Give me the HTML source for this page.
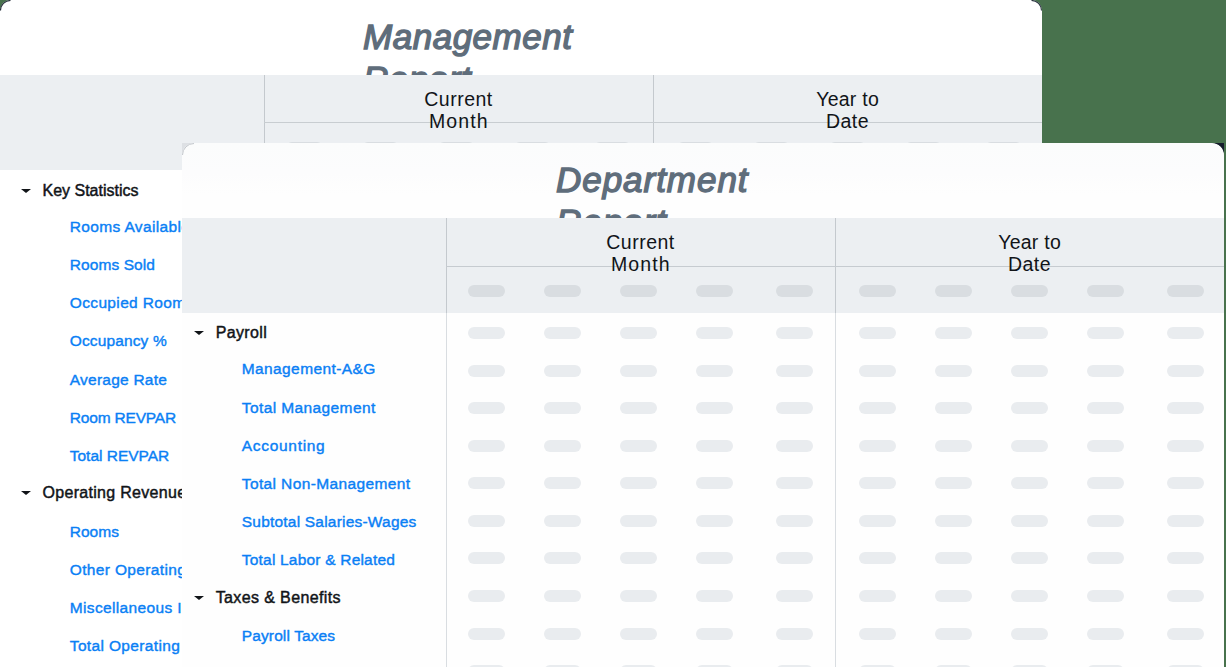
<!DOCTYPE html>
<html><head><meta charset="utf-8"><style>
html,body{margin:0;padding:0;}
body{width:1226px;height:667px;overflow:hidden;background:#48724d;position:relative;font-family:"Liberation Sans",sans-serif;}
.card{position:absolute;width:1042px;height:900px;background:#fff;border-radius:10.5px 10.5px 0 0;overflow:hidden;}
.front{background:#fefefe;border-radius:12px 12px 0 0;}
.frost{position:absolute;left:0;top:0;width:1042px;height:75px;background:linear-gradient(#fbfcfc 0px,#fcfcfd 30px,#fefefe 52px);}
.title{position:absolute;font:italic 35px/42.4px "Liberation Sans",sans-serif;letter-spacing:0.3px;-webkit-text-stroke:1.4px #5f6d7b;color:#5f6d7b;white-space:nowrap;}
.band{position:absolute;left:0;top:75px;width:1042px;height:95px;background:#eceff2;}
.vline{position:absolute;top:75px;width:1px;height:95px;background:#c4c9ce;}
.vline2{position:absolute;top:170px;width:1px;height:800px;background:#d9dde1;}
.hline{position:absolute;left:264px;top:123px;width:778px;height:1px;background:#c6cbd0;}
.card:not(.front) .hline{top:122px;background:#c8cdd1;}
.colh{position:absolute;top:88.8px;width:389px;text-align:center;font:19.5px/21.9px "Liberation Sans",sans-serif;letter-spacing:0.5px;color:#111418;}
.pill{position:absolute;width:37px;height:12px;border-radius:6px;}
.ph{background:#d9dde1;}
.pb{background:#e9ecef;}
.tri{position:absolute;width:0;height:0;border-left:5px solid transparent;border-right:5px solid transparent;border-top:4.7px solid #111418;}
.sh{position:absolute;white-space:nowrap;font:16.0px/16.0px "Liberation Sans",sans-serif;color:#111418;-webkit-text-stroke:0.45px #111418;letter-spacing:0.45px;}
.si{position:absolute;white-space:nowrap;font:15.5px/15.5px "Liberation Sans",sans-serif;color:#0a7ff5;-webkit-text-stroke:0.4px #0a7ff5;letter-spacing:0.25px;}
</style></head><body>
<div class="card" style="left:0px;top:0px">
<div class="title" style="left:363px;top:15.90px;letter-spacing:0.52px">Management<br>Report</div>
<div class="band"></div>
<div class="vline" style="left:264px"></div>
<div class="vline" style="left:653px"></div>
<div class="vline2" style="left:264px"></div>
<div class="vline2" style="left:653px"></div>
<div class="hline"></div>
<div class="colh" style="left:264px">Current<br><span style="letter-spacing:1.1px;margin-right:-0.6px">Month</span></div>
<div class="colh" style="left:653px"><span style="letter-spacing:0.25px;margin-right:-0.25px">Year to</span><br>Date</div>
<div class="pill ph" style="left:286.4px;top:142px"></div>
<div class="pill ph" style="left:362.4px;top:142px"></div>
<div class="pill ph" style="left:438.4px;top:142px"></div>
<div class="pill ph" style="left:514.4px;top:142px"></div>
<div class="pill ph" style="left:594.1px;top:142px"></div>
<div class="pill ph" style="left:677.0px;top:142px"></div>
<div class="pill ph" style="left:753.0px;top:142px"></div>
<div class="pill ph" style="left:829.0px;top:142px"></div>
<div class="pill ph" style="left:905.0px;top:142px"></div>
<div class="pill ph" style="left:985.0px;top:142px"></div>
<div class="pill pb" style="left:286.4px;top:184.00px"></div>
<div class="pill pb" style="left:362.4px;top:184.00px"></div>
<div class="pill pb" style="left:438.4px;top:184.00px"></div>
<div class="pill pb" style="left:514.4px;top:184.00px"></div>
<div class="pill pb" style="left:594.1px;top:184.00px"></div>
<div class="pill pb" style="left:677.0px;top:184.00px"></div>
<div class="pill pb" style="left:753.0px;top:184.00px"></div>
<div class="pill pb" style="left:829.0px;top:184.00px"></div>
<div class="pill pb" style="left:905.0px;top:184.00px"></div>
<div class="pill pb" style="left:985.0px;top:184.00px"></div>
<div class="pill pb" style="left:286.4px;top:221.60px"></div>
<div class="pill pb" style="left:362.4px;top:221.60px"></div>
<div class="pill pb" style="left:438.4px;top:221.60px"></div>
<div class="pill pb" style="left:514.4px;top:221.60px"></div>
<div class="pill pb" style="left:594.1px;top:221.60px"></div>
<div class="pill pb" style="left:677.0px;top:221.60px"></div>
<div class="pill pb" style="left:753.0px;top:221.60px"></div>
<div class="pill pb" style="left:829.0px;top:221.60px"></div>
<div class="pill pb" style="left:905.0px;top:221.60px"></div>
<div class="pill pb" style="left:985.0px;top:221.60px"></div>
<div class="pill pb" style="left:286.4px;top:259.20px"></div>
<div class="pill pb" style="left:362.4px;top:259.20px"></div>
<div class="pill pb" style="left:438.4px;top:259.20px"></div>
<div class="pill pb" style="left:514.4px;top:259.20px"></div>
<div class="pill pb" style="left:594.1px;top:259.20px"></div>
<div class="pill pb" style="left:677.0px;top:259.20px"></div>
<div class="pill pb" style="left:753.0px;top:259.20px"></div>
<div class="pill pb" style="left:829.0px;top:259.20px"></div>
<div class="pill pb" style="left:905.0px;top:259.20px"></div>
<div class="pill pb" style="left:985.0px;top:259.20px"></div>
<div class="pill pb" style="left:286.4px;top:296.80px"></div>
<div class="pill pb" style="left:362.4px;top:296.80px"></div>
<div class="pill pb" style="left:438.4px;top:296.80px"></div>
<div class="pill pb" style="left:514.4px;top:296.80px"></div>
<div class="pill pb" style="left:594.1px;top:296.80px"></div>
<div class="pill pb" style="left:677.0px;top:296.80px"></div>
<div class="pill pb" style="left:753.0px;top:296.80px"></div>
<div class="pill pb" style="left:829.0px;top:296.80px"></div>
<div class="pill pb" style="left:905.0px;top:296.80px"></div>
<div class="pill pb" style="left:985.0px;top:296.80px"></div>
<div class="pill pb" style="left:286.4px;top:334.40px"></div>
<div class="pill pb" style="left:362.4px;top:334.40px"></div>
<div class="pill pb" style="left:438.4px;top:334.40px"></div>
<div class="pill pb" style="left:514.4px;top:334.40px"></div>
<div class="pill pb" style="left:594.1px;top:334.40px"></div>
<div class="pill pb" style="left:677.0px;top:334.40px"></div>
<div class="pill pb" style="left:753.0px;top:334.40px"></div>
<div class="pill pb" style="left:829.0px;top:334.40px"></div>
<div class="pill pb" style="left:905.0px;top:334.40px"></div>
<div class="pill pb" style="left:985.0px;top:334.40px"></div>
<div class="pill pb" style="left:286.4px;top:372.00px"></div>
<div class="pill pb" style="left:362.4px;top:372.00px"></div>
<div class="pill pb" style="left:438.4px;top:372.00px"></div>
<div class="pill pb" style="left:514.4px;top:372.00px"></div>
<div class="pill pb" style="left:594.1px;top:372.00px"></div>
<div class="pill pb" style="left:677.0px;top:372.00px"></div>
<div class="pill pb" style="left:753.0px;top:372.00px"></div>
<div class="pill pb" style="left:829.0px;top:372.00px"></div>
<div class="pill pb" style="left:905.0px;top:372.00px"></div>
<div class="pill pb" style="left:985.0px;top:372.00px"></div>
<div class="pill pb" style="left:286.4px;top:409.60px"></div>
<div class="pill pb" style="left:362.4px;top:409.60px"></div>
<div class="pill pb" style="left:438.4px;top:409.60px"></div>
<div class="pill pb" style="left:514.4px;top:409.60px"></div>
<div class="pill pb" style="left:594.1px;top:409.60px"></div>
<div class="pill pb" style="left:677.0px;top:409.60px"></div>
<div class="pill pb" style="left:753.0px;top:409.60px"></div>
<div class="pill pb" style="left:829.0px;top:409.60px"></div>
<div class="pill pb" style="left:905.0px;top:409.60px"></div>
<div class="pill pb" style="left:985.0px;top:409.60px"></div>
<div class="pill pb" style="left:286.4px;top:447.20px"></div>
<div class="pill pb" style="left:362.4px;top:447.20px"></div>
<div class="pill pb" style="left:438.4px;top:447.20px"></div>
<div class="pill pb" style="left:514.4px;top:447.20px"></div>
<div class="pill pb" style="left:594.1px;top:447.20px"></div>
<div class="pill pb" style="left:677.0px;top:447.20px"></div>
<div class="pill pb" style="left:753.0px;top:447.20px"></div>
<div class="pill pb" style="left:829.0px;top:447.20px"></div>
<div class="pill pb" style="left:905.0px;top:447.20px"></div>
<div class="pill pb" style="left:985.0px;top:447.20px"></div>
<div class="pill pb" style="left:286.4px;top:484.80px"></div>
<div class="pill pb" style="left:362.4px;top:484.80px"></div>
<div class="pill pb" style="left:438.4px;top:484.80px"></div>
<div class="pill pb" style="left:514.4px;top:484.80px"></div>
<div class="pill pb" style="left:594.1px;top:484.80px"></div>
<div class="pill pb" style="left:677.0px;top:484.80px"></div>
<div class="pill pb" style="left:753.0px;top:484.80px"></div>
<div class="pill pb" style="left:829.0px;top:484.80px"></div>
<div class="pill pb" style="left:905.0px;top:484.80px"></div>
<div class="pill pb" style="left:985.0px;top:484.80px"></div>
<div class="pill pb" style="left:286.4px;top:522.40px"></div>
<div class="pill pb" style="left:362.4px;top:522.40px"></div>
<div class="pill pb" style="left:438.4px;top:522.40px"></div>
<div class="pill pb" style="left:514.4px;top:522.40px"></div>
<div class="pill pb" style="left:594.1px;top:522.40px"></div>
<div class="pill pb" style="left:677.0px;top:522.40px"></div>
<div class="pill pb" style="left:753.0px;top:522.40px"></div>
<div class="pill pb" style="left:829.0px;top:522.40px"></div>
<div class="pill pb" style="left:905.0px;top:522.40px"></div>
<div class="pill pb" style="left:985.0px;top:522.40px"></div>
<div class="pill pb" style="left:286.4px;top:560.00px"></div>
<div class="pill pb" style="left:362.4px;top:560.00px"></div>
<div class="pill pb" style="left:438.4px;top:560.00px"></div>
<div class="pill pb" style="left:514.4px;top:560.00px"></div>
<div class="pill pb" style="left:594.1px;top:560.00px"></div>
<div class="pill pb" style="left:677.0px;top:560.00px"></div>
<div class="pill pb" style="left:753.0px;top:560.00px"></div>
<div class="pill pb" style="left:829.0px;top:560.00px"></div>
<div class="pill pb" style="left:905.0px;top:560.00px"></div>
<div class="pill pb" style="left:985.0px;top:560.00px"></div>
<div class="pill pb" style="left:286.4px;top:597.60px"></div>
<div class="pill pb" style="left:362.4px;top:597.60px"></div>
<div class="pill pb" style="left:438.4px;top:597.60px"></div>
<div class="pill pb" style="left:514.4px;top:597.60px"></div>
<div class="pill pb" style="left:594.1px;top:597.60px"></div>
<div class="pill pb" style="left:677.0px;top:597.60px"></div>
<div class="pill pb" style="left:753.0px;top:597.60px"></div>
<div class="pill pb" style="left:829.0px;top:597.60px"></div>
<div class="pill pb" style="left:905.0px;top:597.60px"></div>
<div class="pill pb" style="left:985.0px;top:597.60px"></div>
<div class="pill pb" style="left:286.4px;top:635.20px"></div>
<div class="pill pb" style="left:362.4px;top:635.20px"></div>
<div class="pill pb" style="left:438.4px;top:635.20px"></div>
<div class="pill pb" style="left:514.4px;top:635.20px"></div>
<div class="pill pb" style="left:594.1px;top:635.20px"></div>
<div class="pill pb" style="left:677.0px;top:635.20px"></div>
<div class="pill pb" style="left:753.0px;top:635.20px"></div>
<div class="pill pb" style="left:829.0px;top:635.20px"></div>
<div class="pill pb" style="left:905.0px;top:635.20px"></div>
<div class="pill pb" style="left:985.0px;top:635.20px"></div>
<div class="pill pb" style="left:286.4px;top:672.80px"></div>
<div class="pill pb" style="left:362.4px;top:672.80px"></div>
<div class="pill pb" style="left:438.4px;top:672.80px"></div>
<div class="pill pb" style="left:514.4px;top:672.80px"></div>
<div class="pill pb" style="left:594.1px;top:672.80px"></div>
<div class="pill pb" style="left:677.0px;top:672.80px"></div>
<div class="pill pb" style="left:753.0px;top:672.80px"></div>
<div class="pill pb" style="left:829.0px;top:672.80px"></div>
<div class="pill pb" style="left:905.0px;top:672.80px"></div>
<div class="pill pb" style="left:985.0px;top:672.80px"></div>
<div class="tri" style="left:20.90px;top:188.70px"></div>
<div class="sh" style="left:42.50px;top:183.00px;letter-spacing:-0.007px">Key Statistics</div>
<div class="si" style="left:69.80px;top:219.22px;letter-spacing:0.350px">Rooms Available</div>
<div class="si" style="left:69.80px;top:257.31px;letter-spacing:0.072px">Rooms Sold</div>
<div class="si" style="left:69.80px;top:295.38px;letter-spacing:0.350px">Occupied Rooms</div>
<div class="si" style="left:69.80px;top:333.46px;letter-spacing:0.130px">Occupancy %</div>
<div class="si" style="left:69.80px;top:371.55px;letter-spacing:0.231px">Average Rate</div>
<div class="si" style="left:69.80px;top:409.62px;letter-spacing:-0.190px">Room REVPAR</div>
<div class="si" style="left:69.80px;top:447.70px;letter-spacing:-0.023px">Total REVPAR</div>
<div class="tri" style="left:20.90px;top:490.70px"></div>
<div class="sh" style="left:42.50px;top:485.00px;letter-spacing:0.300px">Operating Revenue</div>
<div class="si" style="left:69.80px;top:523.87px;letter-spacing:0.000px">Rooms</div>
<div class="si" style="left:69.80px;top:561.95px;letter-spacing:0.350px">Other Operating Revenue</div>
<div class="si" style="left:69.80px;top:600.02px;letter-spacing:0.350px">Miscellaneous Income</div>
<div class="si" style="left:69.80px;top:638.11px;letter-spacing:0.350px">Total Operating Revenue</div>
</div>
<svg width="1226" height="667" style="position:absolute;left:0;top:0">
<path d="M0.5,10.5 A10 10 0 0 1 10.5,0.5" fill="none" stroke="#101828" stroke-width="1.1" stroke-opacity="0.9"/>
<path d="M1031.5,0.5 A10 10 0 0 1 1041.5,10.5" fill="none" stroke="#101828" stroke-width="1.1" stroke-opacity="0.9"/>
</svg>

<div class="card front" style="left:182px;top:143px">
<div class="frost"></div>
<div class="title" style="left:374px;top:15.90px;letter-spacing:0.97px">Department<br>Report</div>
<div class="band"></div>
<div class="vline" style="left:264px"></div>
<div class="vline" style="left:653px"></div>
<div class="vline2" style="left:264px"></div>
<div class="vline2" style="left:653px"></div>
<div class="hline"></div>
<div class="colh" style="left:264px">Current<br><span style="letter-spacing:1.1px;margin-right:-0.6px">Month</span></div>
<div class="colh" style="left:653px"><span style="letter-spacing:0.25px;margin-right:-0.25px">Year to</span><br>Date</div>
<div class="pill ph" style="left:286.4px;top:142px"></div>
<div class="pill ph" style="left:362.4px;top:142px"></div>
<div class="pill ph" style="left:438.4px;top:142px"></div>
<div class="pill ph" style="left:514.4px;top:142px"></div>
<div class="pill ph" style="left:594.1px;top:142px"></div>
<div class="pill ph" style="left:677.0px;top:142px"></div>
<div class="pill ph" style="left:753.0px;top:142px"></div>
<div class="pill ph" style="left:829.0px;top:142px"></div>
<div class="pill ph" style="left:905.0px;top:142px"></div>
<div class="pill ph" style="left:985.0px;top:142px"></div>
<div class="pill pb" style="left:286.4px;top:184.00px"></div>
<div class="pill pb" style="left:362.4px;top:184.00px"></div>
<div class="pill pb" style="left:438.4px;top:184.00px"></div>
<div class="pill pb" style="left:514.4px;top:184.00px"></div>
<div class="pill pb" style="left:594.1px;top:184.00px"></div>
<div class="pill pb" style="left:677.0px;top:184.00px"></div>
<div class="pill pb" style="left:753.0px;top:184.00px"></div>
<div class="pill pb" style="left:829.0px;top:184.00px"></div>
<div class="pill pb" style="left:905.0px;top:184.00px"></div>
<div class="pill pb" style="left:985.0px;top:184.00px"></div>
<div class="pill pb" style="left:286.4px;top:221.57px"></div>
<div class="pill pb" style="left:362.4px;top:221.57px"></div>
<div class="pill pb" style="left:438.4px;top:221.57px"></div>
<div class="pill pb" style="left:514.4px;top:221.57px"></div>
<div class="pill pb" style="left:594.1px;top:221.57px"></div>
<div class="pill pb" style="left:677.0px;top:221.57px"></div>
<div class="pill pb" style="left:753.0px;top:221.57px"></div>
<div class="pill pb" style="left:829.0px;top:221.57px"></div>
<div class="pill pb" style="left:905.0px;top:221.57px"></div>
<div class="pill pb" style="left:985.0px;top:221.57px"></div>
<div class="pill pb" style="left:286.4px;top:259.14px"></div>
<div class="pill pb" style="left:362.4px;top:259.14px"></div>
<div class="pill pb" style="left:438.4px;top:259.14px"></div>
<div class="pill pb" style="left:514.4px;top:259.14px"></div>
<div class="pill pb" style="left:594.1px;top:259.14px"></div>
<div class="pill pb" style="left:677.0px;top:259.14px"></div>
<div class="pill pb" style="left:753.0px;top:259.14px"></div>
<div class="pill pb" style="left:829.0px;top:259.14px"></div>
<div class="pill pb" style="left:905.0px;top:259.14px"></div>
<div class="pill pb" style="left:985.0px;top:259.14px"></div>
<div class="pill pb" style="left:286.4px;top:296.71px"></div>
<div class="pill pb" style="left:362.4px;top:296.71px"></div>
<div class="pill pb" style="left:438.4px;top:296.71px"></div>
<div class="pill pb" style="left:514.4px;top:296.71px"></div>
<div class="pill pb" style="left:594.1px;top:296.71px"></div>
<div class="pill pb" style="left:677.0px;top:296.71px"></div>
<div class="pill pb" style="left:753.0px;top:296.71px"></div>
<div class="pill pb" style="left:829.0px;top:296.71px"></div>
<div class="pill pb" style="left:905.0px;top:296.71px"></div>
<div class="pill pb" style="left:985.0px;top:296.71px"></div>
<div class="pill pb" style="left:286.4px;top:334.28px"></div>
<div class="pill pb" style="left:362.4px;top:334.28px"></div>
<div class="pill pb" style="left:438.4px;top:334.28px"></div>
<div class="pill pb" style="left:514.4px;top:334.28px"></div>
<div class="pill pb" style="left:594.1px;top:334.28px"></div>
<div class="pill pb" style="left:677.0px;top:334.28px"></div>
<div class="pill pb" style="left:753.0px;top:334.28px"></div>
<div class="pill pb" style="left:829.0px;top:334.28px"></div>
<div class="pill pb" style="left:905.0px;top:334.28px"></div>
<div class="pill pb" style="left:985.0px;top:334.28px"></div>
<div class="pill pb" style="left:286.4px;top:371.85px"></div>
<div class="pill pb" style="left:362.4px;top:371.85px"></div>
<div class="pill pb" style="left:438.4px;top:371.85px"></div>
<div class="pill pb" style="left:514.4px;top:371.85px"></div>
<div class="pill pb" style="left:594.1px;top:371.85px"></div>
<div class="pill pb" style="left:677.0px;top:371.85px"></div>
<div class="pill pb" style="left:753.0px;top:371.85px"></div>
<div class="pill pb" style="left:829.0px;top:371.85px"></div>
<div class="pill pb" style="left:905.0px;top:371.85px"></div>
<div class="pill pb" style="left:985.0px;top:371.85px"></div>
<div class="pill pb" style="left:286.4px;top:409.42px"></div>
<div class="pill pb" style="left:362.4px;top:409.42px"></div>
<div class="pill pb" style="left:438.4px;top:409.42px"></div>
<div class="pill pb" style="left:514.4px;top:409.42px"></div>
<div class="pill pb" style="left:594.1px;top:409.42px"></div>
<div class="pill pb" style="left:677.0px;top:409.42px"></div>
<div class="pill pb" style="left:753.0px;top:409.42px"></div>
<div class="pill pb" style="left:829.0px;top:409.42px"></div>
<div class="pill pb" style="left:905.0px;top:409.42px"></div>
<div class="pill pb" style="left:985.0px;top:409.42px"></div>
<div class="pill pb" style="left:286.4px;top:446.99px"></div>
<div class="pill pb" style="left:362.4px;top:446.99px"></div>
<div class="pill pb" style="left:438.4px;top:446.99px"></div>
<div class="pill pb" style="left:514.4px;top:446.99px"></div>
<div class="pill pb" style="left:594.1px;top:446.99px"></div>
<div class="pill pb" style="left:677.0px;top:446.99px"></div>
<div class="pill pb" style="left:753.0px;top:446.99px"></div>
<div class="pill pb" style="left:829.0px;top:446.99px"></div>
<div class="pill pb" style="left:905.0px;top:446.99px"></div>
<div class="pill pb" style="left:985.0px;top:446.99px"></div>
<div class="pill pb" style="left:286.4px;top:484.56px"></div>
<div class="pill pb" style="left:362.4px;top:484.56px"></div>
<div class="pill pb" style="left:438.4px;top:484.56px"></div>
<div class="pill pb" style="left:514.4px;top:484.56px"></div>
<div class="pill pb" style="left:594.1px;top:484.56px"></div>
<div class="pill pb" style="left:677.0px;top:484.56px"></div>
<div class="pill pb" style="left:753.0px;top:484.56px"></div>
<div class="pill pb" style="left:829.0px;top:484.56px"></div>
<div class="pill pb" style="left:905.0px;top:484.56px"></div>
<div class="pill pb" style="left:985.0px;top:484.56px"></div>
<div class="pill pb" style="left:286.4px;top:522.13px"></div>
<div class="pill pb" style="left:362.4px;top:522.13px"></div>
<div class="pill pb" style="left:438.4px;top:522.13px"></div>
<div class="pill pb" style="left:514.4px;top:522.13px"></div>
<div class="pill pb" style="left:594.1px;top:522.13px"></div>
<div class="pill pb" style="left:677.0px;top:522.13px"></div>
<div class="pill pb" style="left:753.0px;top:522.13px"></div>
<div class="pill pb" style="left:829.0px;top:522.13px"></div>
<div class="pill pb" style="left:905.0px;top:522.13px"></div>
<div class="pill pb" style="left:985.0px;top:522.13px"></div>
<div class="tri" style="left:12.20px;top:187.85px"></div>
<div class="sh" style="left:33.80px;top:182.15px;letter-spacing:0.333px">Payroll</div>
<div class="si" style="left:59.80px;top:218.43px;letter-spacing:0.387px">Management-A&amp;G</div>
<div class="si" style="left:59.80px;top:256.50px;letter-spacing:0.397px">Total Management</div>
<div class="si" style="left:59.80px;top:294.56px;letter-spacing:0.694px">Accounting</div>
<div class="si" style="left:59.80px;top:332.64px;letter-spacing:0.376px">Total Non-Management</div>
<div class="si" style="left:59.80px;top:370.70px;letter-spacing:0.205px">Subtotal Salaries-Wages</div>
<div class="si" style="left:59.80px;top:408.78px;letter-spacing:0.200px">Total Labor &amp; Related</div>
<div class="tri" style="left:12.10px;top:452.70px"></div>
<div class="sh" style="left:33.70px;top:447.00px;letter-spacing:0.380px">Taxes &amp; Benefits</div>
<div class="si" style="left:59.80px;top:484.92px;letter-spacing:0.117px">Payroll Taxes</div>
</div>
<svg width="1226" height="667" style="position:absolute;left:0;top:0">
<path d="M182,143 L194,143 A12 12 0 0 0 182,155 Z" fill="#dde0e4"/>
<path d="M182.5,155 A11.5 11.5 0 0 1 194,143.5" fill="none" stroke="#c3c7cc" stroke-width="1"/>
<path d="M1212,143 L1224,143 L1224,155 A12 12 0 0 0 1212,143 Z" fill="#151c2c"/>
</svg>
</body></html>
